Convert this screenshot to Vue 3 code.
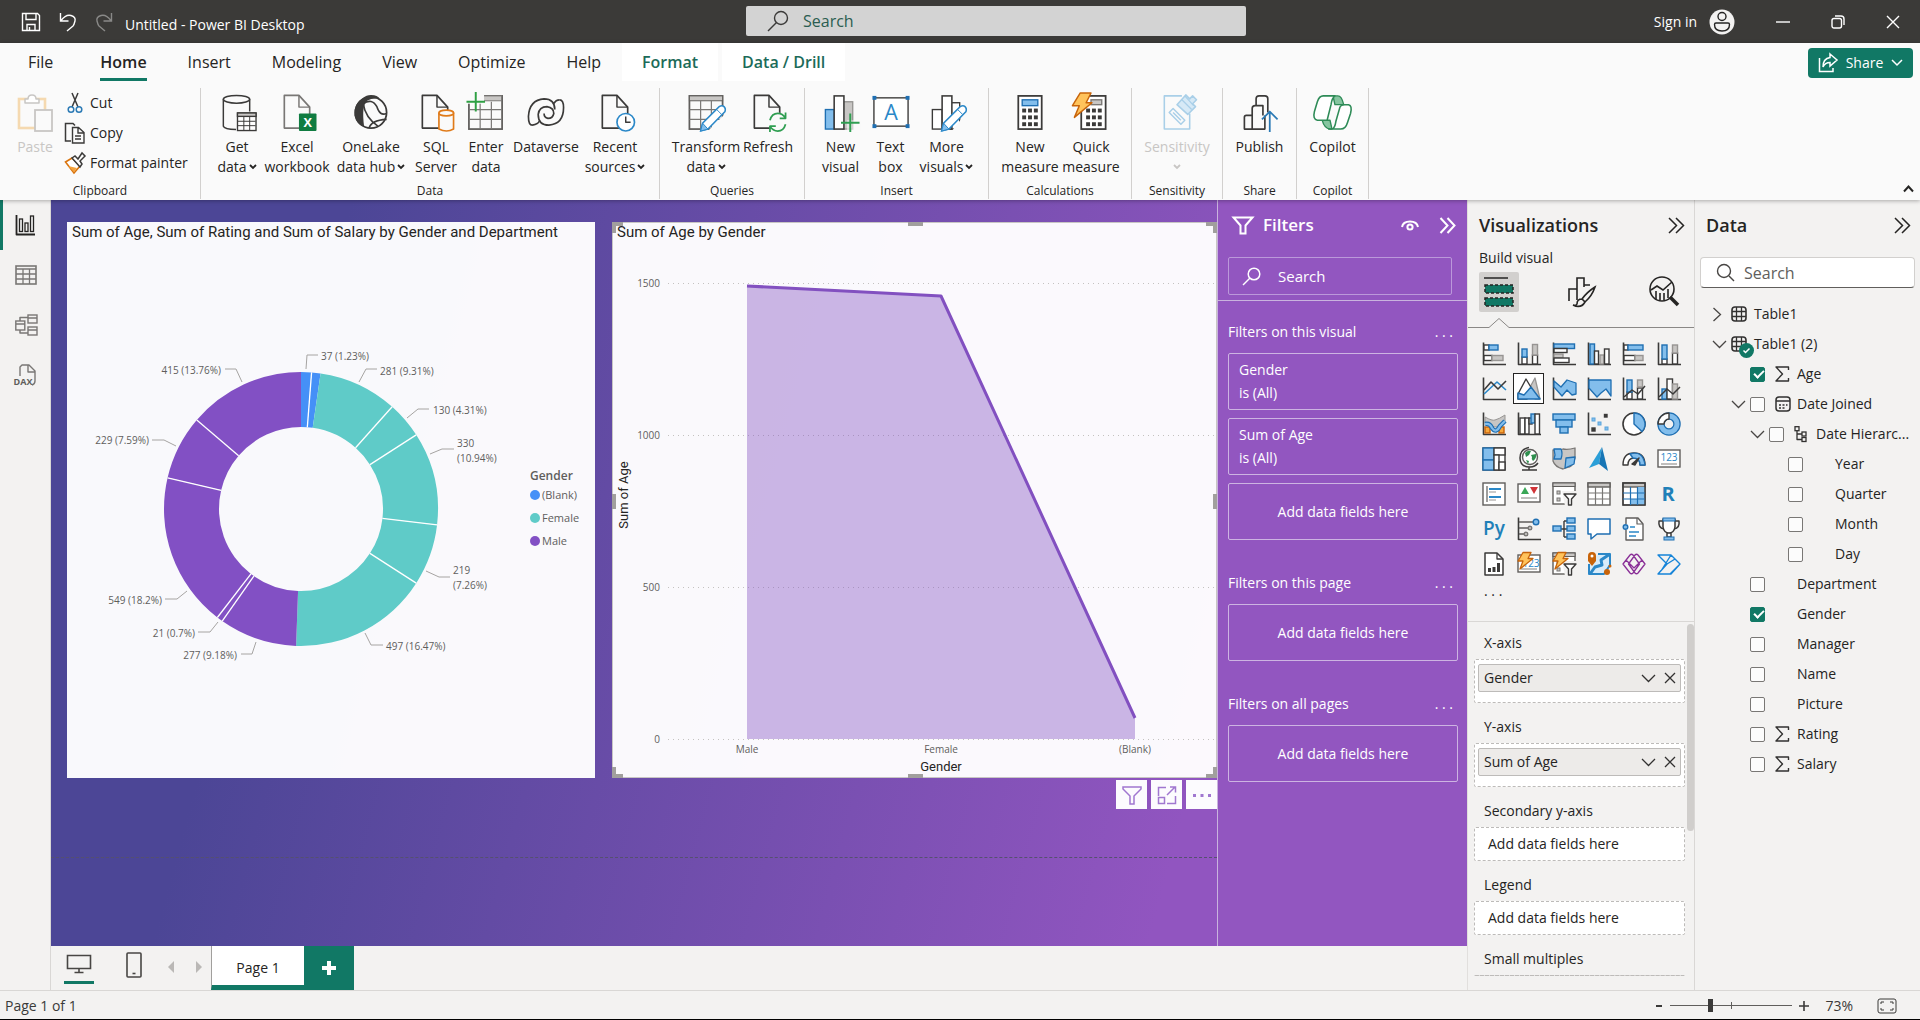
<script setup>
const INK = '#3b3a39'
const BLUE = '#83beec'
const DEEP = '#1f6fb2'
const GREY = '#c8c6c4'

const rect = (x, y, w, h, fill = '#fff', stroke = INK, sw = 1.4) =>
  `<rect x="${x}" y="${y}" width="${w}" height="${h}" fill="${fill}" stroke="${stroke}" stroke-width="${sw}"/>`
const line = (d, stroke = INK, sw = 1.5, fill = 'none') =>
  `<path d="${d}" stroke="${stroke}" stroke-width="${sw}" fill="${fill}" stroke-linejoin="round"/>`
const circle = (x, y, r, fill = 'none', stroke = INK, sw = 1.4) =>
  `<circle cx="${x}" cy="${y}" r="${r}" fill="${fill}" stroke="${stroke}" stroke-width="${sw}"/>`
const glyph = (x, y, size, text, fill = DEEP, weight = 400) =>
  `<text x="${x}" y="${y}" font-size="${size}" fill="${fill}" font-weight="${weight}" text-anchor="middle">${text}</text>`
const doc = (x, stroke = INK) =>
  line(`M${x} 3.5h15l11 12v21.5h-26z`, stroke, 1.7, '#fafafa') + line(`M${x + 15} 3.5v12h11`, stroke, 1.5)
const pencil =
  '<path d="M14.5 40l2-8L33.5 15q3-2 5 0t1 5L22 38z" fill="#fff" stroke="#2b88c8" stroke-width="1.5"/><path d="M14.5 40l2-8 5.5 6z" fill="#83beec" stroke="#2b88c8"/><path d="M31 18l5 5" stroke="#2b88c8"/>'
const bolt = line('M6 .5h8l-3 6h5L3 17l3-8H1z', '#c8640a', 1.3, '#ffc35b')

const ribbonIcons = {
  getData:
    line('M6 7.5V35q1 3 13 3.5M33 7.5V20') + '<ellipse cx="19.5" cy="7.5" rx="13.5" ry="4" fill="#fafafa" stroke="#3b3a39" stroke-width="1.6"/>' +
    rect(20.5, 21.5, 19, 18, '#fff') + rect(20.5, 21.5, 19, 3.5, GREY) + line('M27 25v14M33 25v14M21 30h18M21 34.5h18', INK, 1),
  excel: doc(7, '#797775') + '<rect x="22" y="22" width="18" height="18" rx="1" fill="#107c41"/>' + glyph(31, 36, 13, 'X', '#fff', 700),
  onelake:
    circle(20, 21, 16, '#fafafa', INK, 1.8) +
    '<path d="M20 3q7 0 9 4-8-1-13 2-6 5-3 27-8-3-10-12Q2 12 12 6q3-3 8-3z" fill="#3b3a39"/>' +
    line('M12 12q2 14 15 23M12 12q9-6 14 3 3 10 10 7M18 37Q20 29 36 28', INK, 1.7),
  sql: doc(6) + line('M23 21v17q8 4 15 0V21', '#e07b1a', 1.7, '#fafafa') + '<ellipse cx="30.5" cy="21.5" rx="7.5" ry="3" fill="#fafafa" stroke="#e07b1a" stroke-width="1.7"/>',
  enter:
    rect(2.5, 4, 34, 34, '#fafafa', '#605e5c', 1.8) + rect(12, 4, 24, 5, GREY, '#797775', 1) +
    line('M14 10v28M25.5 10v28M3 18h33M3 28h33', '#797775', 1.2) + '<path d="M0 2h18v10H0z" fill="#fafafa"/>' + line('M9.5 0v20M0 10h19', '#2ea043', 2),
  dataverse:
    line('M34 8q4 0 4 8 0 17-15 18-11 0-11-11 1-8 9-8 7 1 7 7-1 5-6 5-4-1-4-5', INK, 1.7) +
    line('M6 34q-4 0-4-9Q3 8 18 7q11 0 11 11M6 34q6-1 7-4M34 8q-4 0-6 4', INK, 1.7),
  recent: doc(7) + circle(31, 31, 9, '#fff', '#2b88c8', 1.7) + line('M31 25v6h5', INK, 1.5),
  transform:
    rect(3, 4, 34, 34, '#fafafa', '#605e5c', 1.8) + rect(3, 4, 34, 5, GREY, '#605e5c', 1) +
    line('M14.5 9v29M25.5 9v29M3 18h34M3 28h34', '#797775', 1.2) + '<path d="M22 40l18-18v18z" fill="#fafafa"/>' + pencil,
  refresh:
    doc(6) + '<circle cx="30" cy="31" r="10" fill="#fafafa"/>' + line('M22 29q2-7 8-7 5 0 8 5v-6M38 27h-6M38 33q-2 7-8 7-5 0-8-5v6M22 35h6', '#2f9e51', 1.8),
  newVisual: rect(4, 18, 9, 20, BLUE, DEEP) + rect(22, 10, 10, 28, GREY, '#979593') + rect(13, 4, 10, 34, '#fff', INK, 1.6) + '<path d="M26 29h14v11H26z" fill="#fafafa" opacity=".6"/>' + line('M29.5 22v19M20 31.5h19', '#2f9e51', 2),
  textBox: rect(2.5, 6, 35, 29, '#fff', INK, 1.4) + [[1, 4], [35, 4], [1, 33], [35, 33]].map(([x, y]) => `<rect x="${x}" y="${y}" width="4" height="4" fill="#1f6fb2"/>`).join('') + glyph(20, 29, 22, 'A', '#2b88c8'),
  moreVisuals: rect(5, 18, 10, 20) + rect(24, 11, 9, 27) + rect(15, 4, 10, 34, '#fff', INK, 1.6) + '<path d="M25 40l14-18v18z" fill="#fafafa"/>' + pencil,
  newMeasure: rect(8, 4, 24, 34, '#fff', INK, 1.8) + rect(12, 8, 16, 6, BLUE, DEEP) + [17, 24, 31].map((y) => [12, 18, 24].map((x) => `<rect x="${x}" y="${y}" width="4" height="4" fill="${INK}"/>`).join('')).join(''),
  quickMeasure: rect(10, 4, 25, 34, '#fff', INK, 1.8) + rect(20, 8, 11, 5, GREY, '#797775') + [17, 24, 31].map((y) => [15, 21, 27].map((x) => `<rect x="${x}" y="${y}" width="4" height="4" fill="${INK}"/>`).join('')).join('') + line('M9 1h11l-5 10h6L3 26l5-12H1z', '#c8640a', 1.5, '#ffc35b'),
  sensitivity:
    line('M25 4H7v34h26V22', '#a9cfe8', 1.6) + line('M12 21l4-4 12 12-4 4zM16 21l8 8', '#a9cfe8', 1.5) +
    line('M20 13l9-10 4 4 3-3 4 4-4 4 3 3-8 8z', '#a9cfe8', 1.6, '#d6e9f6') + line('M25 8l10 10M28 4l9 10', '#a9cfe8', 1.3),
  publish: line('M12 38H4V26q0-2 2-2h6zM12 38V17q0-3 3-3h8v10M16 14V7q0-3 3-3h6q3 0 3 3v14M12 38h13V24', INK, 1.7) + line('M30 41V20M22 28l8-8 8 8', '#2b7ab5', 1.8),
  copilot:
    line('M21 4h5q4 0 6 9h-9zM10 29h8l2 9h-2q-6-1-8-9z', '#2e8b57', 1.4, '#86c5a0') +
    line('M11 4h12q-3 2-4 9l-4 16H5q-5-1-3-9l3-10q2-6 6-6z', '#2e8b57', 1.6, '#fff') +
    line('M20 38q3-1 4-8l4-14q1-3 5-3h4q4 1 2 9l-3 9q-2 7-7 7H16', '#2e8b57', 1.6, '#fff'),
  paste:
    rect(4, 7, 26, 29, '#fafafa', '#f5d9b0', 2.6) + line('M10 11V7h3q0-4 4-4t4 4h3v4z', '#c8c6c4', 1.5, '#fff') + rect(20, 18, 17, 21, '#fafafa', '#c8c6c4', 1.8),
}

const ribbonGroups = [
  {
    name: 'Data', key: 'data',
    tools: [
      ['getData', 'Get', 'data', true], ['excel', 'Excel', 'workbook'], ['onelake', 'OneLake', 'data hub', true], ['sql', 'SQL', 'Server'],
      ['enter', 'Enter', 'data'], ['dataverse', 'Dataverse', ''], ['recent', 'Recent', 'sources', true],
    ],
  },
  { name: 'Queries', key: 'queries', tools: [['transform', 'Transform', 'data', true], ['refresh', 'Refresh', '']] },
  { name: 'Insert', key: 'insert', tools: [['newVisual', 'New', 'visual'], ['textBox', 'Text', 'box'], ['moreVisuals', 'More', 'visuals', true]] },
  { name: 'Calculations', key: 'calc', tools: [['newMeasure', 'New', 'measure'], ['quickMeasure', 'Quick', 'measure']] },
  { name: 'Sensitivity', key: 'sens', off: true, tools: [['sensitivity', 'Sensitivity', '', true]] },
  { name: 'Share', key: 'publish', tools: [['publish', 'Publish', '']] },
  { name: 'Copilot', key: 'copilot', tools: [['copilot', 'Copilot', '']] },
]

const tabs = ['File', 'Home', 'Insert', 'Modeling', 'View', 'Optimize', 'Help', 'Format', 'Data / Drill']

const axis = line('M1.5 .5V22.5H24', INK, 1.6)
const sheet = rect(1, 1, 22, 22, '#fff', '#605e5c') + rect(1, 1, 22, 4, GREY, '#605e5c')
const filterCard = rect(1, 1, 22, 21, '#fff', '#605e5c') + rect(1, 1, 22, 3.5, GREY, '#605e5c', 1) + rect(5, 9, 3, 3, GREY, '#797775', 1) + rect(5, 16, 3, 3, GREY, '#797775', 1) + '<path d="M10 9h14v15H13z" fill="#f3f2f1"/>' + line('M12 12h12l-4.5 5v6h-3v-6z', INK, 1.4, '#fff')
const visualIcons = [
  ['Stacked bar chart', axis + rect(2, 3, 5, 5) + rect(7, 3, 9, 5, BLUE, DEEP) + rect(2, 13.5, 8, 5) + rect(10, 13.5, 11, 5, GREY, '#979593')],
  ['Stacked column chart', axis + rect(5, 15, 5, 7) + rect(5, 7, 5, 8, BLUE, DEEP) + rect(15.5, 13, 5, 9) + rect(15.5, 2.5, 5, 10.5, GREY, '#979593')],
  ['Clustered bar chart', axis + rect(2, 2, 20.5, 4.5, BLUE, DEEP) + rect(2, 6.5, 13, 4) + rect(2, 12, 9, 4, GREY, '#979593') + rect(2, 16, 15, 4.5)],
  ['Clustered column chart', axis + rect(3, 2, 4.5, 20, BLUE, DEEP) + rect(7.5, 9, 4, 13) + rect(13, 13, 4, 9, GREY, '#979593') + rect(17.5, 7, 4.5, 15)],
  ['100% stacked bar chart', axis + rect(2, 3, 4, 5) + rect(6, 3, 15, 5, BLUE, DEEP) + rect(2, 13.5, 11, 5) + rect(13, 13.5, 8, 5, GREY, '#979593')],
  ['100% stacked column chart', axis + rect(5, 17, 5, 5) + rect(5, 3, 5, 14, BLUE, DEEP) + rect(15.5, 11, 5, 11) + rect(15.5, 3, 5, 8, GREY, '#979593')],
  ['Line chart', axis + line('M2 17L15 5l9 8', '#2b88c8', 1.6) + line('M2 13l7-8 7 7 8-8', INK, 1.6)],
  ['Area chart', line('M12 12l6-11 5 21h-5z', '#979593', 1.3, GREY) + line('M1 17L9 2l9 15-8 5H1z', INK, 1.4, '#fff') + line('M1 22v-6l6 2 7-8 9 12z', DEEP, 1.4, BLUE)],
  ['Stacked area chart', axis + line('M2 4l7 6 6-7 9 3v11l-4 1-5-5-5 6-8-9z', DEEP, 1.3, BLUE)],
  ['100% stacked area chart', axis + line('M2 3h22v16l-5-7-5 4-4 4-8-9z', DEEP, 1.3, BLUE)],
  ['Line and stacked column chart', axis + rect(5, 15, 5, 7) + rect(5, 3, 5, 12, BLUE, DEEP) + rect(15.5, 11, 5, 11) + rect(15.5, 3, 5, 7, GREY, '#979593') + line('M2 20l8-7 6 4 7-8')],
  ['Line and clustered column chart', axis + rect(5, 12, 5, 10, BLUE, DEEP) + rect(10, 2, 5.5, 20) + rect(15.5, 7, 5, 15, GREY, '#979593') + line('M2 20l8-8 6 5 7-7')],
  ['Ribbon chart', axis + line('M3 5q7 4 10 3 4-1 10-5v8q-6 4-9 4T3 11z', '#979593', 1, GREY) + rect(3, 15, 5, 6, '#f7a83c', '#c8640a') + rect(17, 15, 5, 6, '#f7a83c', '#c8640a') + line('M3 12q5-1 7 4 4 6 8-2l5-5', DEEP, 4.5) + line('M3 12q5-1 7 4 4 6 8-2l5-5', BLUE, 2.2)],
  ['Waterfall chart', axis + rect(3, 6, 5, 16) + rect(8, 6, 4, 16) + rect(12, 6, 3, 6, GREY) + rect(14, 2, 4, 9, BLUE, DEEP) + rect(18, 2, 4.5, 20)],
  ['Funnel', rect(1, 2, 22, 6, BLUE, DEEP) + rect(4, 8, 16, 7, BLUE, DEEP) + rect(8, 15, 8, 6, BLUE, DEEP)],
  ['Scatter chart', axis + rect(17.5, 2.5, 2.5, 2.5, INK) + rect(5, 6, 3, 3, BLUE, '#5ba4dc', 1) + rect(11, 10, 3, 3, BLUE, '#5ba4dc', 1) + rect(18, 15, 3, 3, BLUE, '#5ba4dc', 1) + rect(5, 16, 3, 3, INK)],
  ['Pie chart', circle(12, 12, 11, '#fff', INK, 1.6) + line('M12 1a11 11 0 0 1 8 18.5L12 12z', DEEP, 1.4, BLUE)],
  ['Donut chart', circle(12, 12, 8, 'none', DEEP, 7.5) + circle(12, 12, 8, 'none', BLUE, 5) + line('M1 12A11 11 0 0 1 12 1v6a5 5 0 0 0-5 5z', INK, 1.4, '#fff')],
  ['Treemap', rect(1, 1, 22, 22) + rect(1, 1, 11, 12, BLUE, DEEP) + rect(1, 13, 11, 10, BLUE, DEEP) + rect(12, 1, 11, 7) + rect(12, 8, 5, 15) + rect(17, 15, 6, 8)],
  ['Map', circle(13, 10, 7.5, '#fff', '#605e5c') + '<path d="M8 6q3-3 6-2l-2 4-3 2zM14 8l5-1q1 4-3 7-2-2-1-4zM9 13l3 1-1 3z" fill="#2f8f4e"/>' + line('M12 .5Q3 2 3 11t10 9q5 0 8-4M12 20v3M5 23h15')],
  ['Filled map', line('M1 3q6 1 10-1 5 1 12-1v10q-2 8-6 9l-6 2q-8-2-10-8z', '#797775', 1.3, GREY) + line('M2 2h7q2 4 0 10H2l1-4zM14 11l9-1-1 7-9 4z', DEEP, 1.3, BLUE)],
  ['Azure map', '<path d="M15 0L2 21l10-4z" fill="#2b9fd8"/><path d="M15 0l6 24-9-7z" fill="#1675b5"/>'],
  ['Gauge', line('M1 18q0-12 11-12t11 12h-5q0-7-6-7t-6 7z', INK, 1.4, '#fff') + line('M8 7q13-4 15 11h-5q0-7-7-7z', DEEP, 1.4, BLUE) + line('M10 17l7-6-4 7z', INK, 1.5, INK)],
  ['Card', rect(1, 3, 22, 17, '#fff', '#605e5c') + glyph(12, 14, 10, '123', '#2b88c8') + line('M4 17h16', '#979593', 1.2)],
  ['Multi-row card', rect(1, 1, 22, 22, '#fff', '#605e5c') + line('M5 4v16', '#605e5c', 1.2) + line('M7 7h12M7 15h12', '#2b88c8', 2.2) + line('M7 10h7M7 18h7', '#979593', 1.2)],
  ['KPI', rect(1, 2, 22, 18, '#fff', '#605e5c') + '<path d="M4 12l4-7 4 7z" fill="#3aa757"/><path d="M13 5h8l-4 7z" fill="#d13438"/>' + line('M4 16h16', '#979593', 1.2)],
  ['Slicer', filterCard],
  ['Table', sheet + line('M8.5 5v18M15.5 5v18M1 11h22M1 17h22', '#797775', 1.2)],
  ['Matrix', sheet + '<path d="M15.5 5H23v18H8.5v-6h7z" fill="#83beec"/>' + rect(1, 1, 22, 22, 'none') + line('M8.5 5v18M15.5 5v18M1 11h22M1 17h22', '#1f6fb2', 1.2)],
  ['R script visual', glyph(11, 19, 20, 'R', '#2080b8', 700)],
  ['Python visual', glyph(12, 18, 19, 'Py', '#2080b8', 600)],
  ['Key influencers', axis + line('M2 5h14M2 11h9M2 17h5', '#605e5c', 1.3) + circle(19, 5, 2.8, BLUE, DEEP) + circle(13, 11, 1.8, GREY, '#797775') + circle(9, 17, 1.8, GREY, '#797775')],
  ['Decomposition tree', line('M9 12h6M12 4v16M12 4h3M12 20h3', INK, 1.4) + rect(1, 9, 8, 5, BLUE, DEEP) + rect(15, 1, 8, 5, BLUE, DEEP) + rect(15, 9, 8, 5, BLUE, DEEP) + rect(15, 17, 8, 5, BLUE, DEEP)],
  ['Questions and answers', line('M1 2h22v15H10l-6 5v-5H1z', DEEP, 1.5, '#fff')],
  ['Narrative', line('M4 7V1h12l5 6v16H4V13', '#605e5c', 1.4, '#fff') + line('M15 1v6h6', '#605e5c', 1.2) + circle(3.5, 10, 2.3, BLUE, DEEP) + line('M8 10h5M7 15h10M7 19h7', '#2b88c8', 1.4)],
  ['Goals', line('M6 4H2q-1 7 5 8M18 4h4q1 7-5 8', INK, 1.5) + line('M6 2h12v8q-1 6-6 6t-6-6zM10 16h4v4h-4z', INK, 1.5, '#fff') + rect(6, 1, 12, 3, BLUE, DEEP, 1) + rect(7, 20, 10, 3, BLUE, DEEP, 1)],
  ['Paginated report', line('M3 1h12l6 6v16H3z', INK, 1.5, '#fff') + line('M15 1v6h6', INK, 1.3) + line('M7.5 20v-4M12 20v-5M16.5 20v-9', INK, 3)],
  ['Card (new)', rect(1, 3, 22, 17, '#fff', '#605e5c') + glyph(14, 15, 10, '123', '#2b88c8') + line('M4 17h16', '#979593', 1.2) + bolt],
  ['Slicer (new)', filterCard + bolt],
  ['ArcGIS Maps', line('M11 2h12v11l-6 9H2V12', '#2b88c8', 2, '#d8ecfa') + line('M23 2l-9 6 1 5-7 2-5 7', '#2b88c8', 3) + '<path d="M1 4q0-4 4-4t4 4v5l-4 5-4-5z" fill="#c8640a"/><circle cx="5" cy="4" r="1.5" fill="#fff"/><circle cx="20" cy="20" r="3" fill="#c8640a"/><circle cx="23" cy="14" r="1.5" fill="#c8640a"/>'],
  ['Power Apps', line('M1 12l7-9q1.5-1.500 3 0L17.500 12l-6.500 9q-1.500 1.500-3 0zM6.500 12L13 3q1.500-1.500 3 0l7 9-7 9q-1.500 1.500-3 0zM4 8l8 8M20 8l-8 8', '#8a2f97', 1.3)],
  ['Power Automate', line('M1 3h13l9 9-9 10H1l9-10zM10 12l8-5M4 19L14 3M13 22l8-8', '#1684d8', 1.4)],
]

const deg = (pct) => (pct / 100) * Math.PI * 2
const at = (pct, r) => [Math.sin(deg(pct)) * r, -Math.cos(deg(pct)) * r]
const slicesRaw = [
  [1.23, 'blank'], [1.05, 'blank'], [9.31, 'female'], [4.31, 'female'], [10.94, 'female'], [7.26, 'female'], [16.47, 'female'],
  [9.18, 'male'], [0.7, 'male'], [18.2, 'male'], [7.59, 'male'], [13.76, 'male'],
]
let sum = 0
const slices = slicesRaw.map(([pct, kind], i) => {
  const from = sum
  sum += pct
  const [a, b, c, d] = [at(from, 137), at(sum, 137), at(sum, 82), at(from, 82)]
  const next = slicesRaw[i + 1]
  return {
    kind,
    d: `M${a}A137 137 0 0 1 ${b}L${c}A82 82 0 0 0 ${d}Z`,
    edge: next && next[1] === kind ? `M${b}L${c}` : '',
  }
})
const callouts = [
  { x: 20, y: -149, lines: ['37 (1.23%)'], d: 'M5 -140L6 -154H17' },
  { x: 79, y: -134, lines: ['281 (9.31%)'], d: 'M58 -127L65 -140H76' },
  { x: 132, y: -95, lines: ['130 (4.31%)'], d: 'M106 -91L117 -100H128' },
  { x: 156, y: -62, lines: ['330', '(10.94%)'], d: 'M129 -55L141 -60H153' },
  { x: 152, y: 65, lines: ['219', '(7.26%)'], d: 'M125 62L138 68H149' },
  { x: 85, y: 141, lines: ['497 (16.47%)'], d: 'M64 124L70 136H82' },
  { x: -64, y: 150, end: true, lines: ['277 (9.18%)'], d: 'M-45 133L-49 145H-60' },
  { x: -106, y: 128, end: true, lines: ['21 (0.7%)'], d: 'M-83 113L-91 123H-103' },
  { x: -139, y: 95, end: true, lines: ['549 (18.2%)'], d: 'M-114 82L-124 90H-136' },
  { x: -152, y: -65, end: true, lines: ['229 (7.59%)'], d: 'M-125 -63L-137 -69H-149' },
  { x: -80, y: -135, end: true, lines: ['415 (13.76%)'], d: 'M-59 -127L-65 -140H-76' },
]
const legend = [['blank', '(Blank)', -14], ['female', 'Female', 9], ['male', 'Male', 32]]

const filterSections = [
  { name: 'Filters on this visual', fields: ['Gender', 'Sum of Age'] },
  { name: 'Filters on this page', fields: [] },
  { name: 'Filters on all pages', fields: [] },
]
const wells = [
  { name: 'X-axis', field: 'Gender' },
  { name: 'Y-axis', field: 'Sum of Age' },
  { name: 'Secondary y-axis' },
  { name: 'Legend' },
]
const fields = [
  { name: 'Age', level: 1, icon: 'sum', on: true },
  { name: 'Date Joined', level: 1, icon: 'date', open: true },
  { name: 'Date Hierarc...', level: 2, icon: 'tree', open: true },
  { name: 'Year', level: 3 }, { name: 'Quarter', level: 3 }, { name: 'Month', level: 3 }, { name: 'Day', level: 3 },
  { name: 'Department', level: 1 }, { name: 'Gender', level: 1, on: true }, { name: 'Manager', level: 1 },
  { name: 'Name', level: 1 }, { name: 'Picture', level: 1 }, { name: 'Rating', level: 1, icon: 'sum' }, { name: 'Salary', level: 1, icon: 'sum' },
]
const fieldIcons = {
  sum: line('M13.5 4V1H1l6.5 7L1 15h12.5v-3', '#323130', 1.4),
  date: '<rect x="1" y="1" width="14" height="14" rx="3" fill="none" stroke="#323130" stroke-width="1.5"/><path d="M1 5h14M4 9h2M7.5 9h2M11 9h1.5M4 12h2M7.5 12h2" stroke="#323130" stroke-width="1.5"/>',
  tree: rect(1, 0.7, 4, 4, 'none', '#323130', 1.3) + rect(8, 6, 4, 4, 'none', '#323130', 1.3) + rect(8, 11.5, 4, 4, 'none', '#323130', 1.3) + line('M3 5v8.5h5M3 8h5', '#323130', 1.3),
  table: '<rect x="1" y="1" width="14" height="14" rx="3" fill="none" stroke="#323130" stroke-width="1.6"/><path d="M5.5 1v14M10.5 1v14M1 5.5h14M1 10.5h14" stroke="#323130" stroke-width="1.3"/>',
}
const railIcons = [
  ['Report view', line('M1.5 1v19.5H20', '#252423', 1.8) + rect(4.5, 5, 3, 12.5, 'none', '#252423', 1.3) + rect(10, 9, 3, 8.5, 'none', '#252423', 1.3) + rect(15.5, 2, 3, 15.5, 'none', '#252423', 1.3)],
  ['Table view', rect(1, 2, 20, 18, 'none', '#797775', 1.6) + line('M1 5h20M1 10h20M1 15h20M8 5v15M14.5 5v15', '#797775', 1.3)],
  ['Model view', rect(0.8, 7, 9, 9, 'none', '#797775') + rect(13, 1, 9, 8, 'none', '#797775') + rect(13, 13, 9, 8, 'none', '#797775') + line('M1 10h9M13 4h9M13 16h9M5 7V3.5h8M5 16v3h8', '#797775')],
  ['DAX query view', line('M5 12V3l2-2h7l6 6v10q0 3-3 4M13 1v7h7', '#797775', 1.4) + glyph(8, 21, 9, 'DAX', '#605e5c', 700)],
]
</script>

<template>
  <div class="app">
    <header class="titlebar">
      <div class="quick">
        <button aria-label="Save"><svg width="20" height="20" viewBox="0 0 20 20"><path d="M1.5 1.5h15l2 2v15h-17zM5 1.5v6h10v-6M6 18.5v-6h8v6M8.5 15v3.5" /></svg></button>
        <button aria-label="Undo"><svg width="18" height="20" viewBox="0 0 18 20"><path d="M1.5 1v8h8M2 8.5Q7 2 12 3.5t4 5.5-2 5l-6 5" /></svg></button>
        <button aria-label="Redo" class="dim"><svg width="18" height="20" viewBox="0 0 18 20"><path d="M16.5 1v8h-8M16 8.5Q11 2 6 3.5T2 9t2 5l6 5" /></svg></button>
        <span class="doc-title">Untitled - Power BI Desktop</span>
      </div>
      <label class="top-search">
        <svg width="22" height="22" viewBox="0 0 22 22"><circle cx="14" cy="8" r="6.500" /><path d="M9.5 12.5L1 21" /></svg>
        <input type="text" placeholder="Search" aria-label="Search" />
      </label>
      <div class="window">
        <button class="signin">Sign in
          <svg width="26" height="26" viewBox="0 0 26 26"><circle cx="13" cy="13" r="12.5" fill="#f3f2f1" stroke="none" /><circle cx="13" cy="7.5" r="4" stroke="#252423" /><path d="M7 14h12q1.5 0 1.5 1.5 0 6.5-7.5 6.5t-7.5-6.500Q5.5 14 7 14z" stroke="#252423" /></svg>
        </button>
        <button aria-label="Minimize"><svg width="14" height="14" viewBox="0 0 14 14"><path d="M0 7h14" /></svg></button>
        <button aria-label="Restore"><svg width="14" height="14" viewBox="0 0 14 14"><rect x="1" y="3.5" width="9.5" height="9.5" rx="2" /><path d="M4 1h6q3 0 3 3v6" /></svg></button>
        <button aria-label="Close"><svg width="14" height="14" viewBox="0 0 14 14"><path d="M1 1l12 12M13 1L1 13" /></svg></button>
      </div>
    </header>

    <section class="ribbon">
      <nav class="tabs">
        <button v-for="t in tabs" :key="t" class="tab" :class="{ file: t === 'File', home: t === 'Home', extra: t === 'Format' || t === 'Data / Drill' }"><span>{{ t }}</span></button>
        <button class="share-button">
          <svg width="20" height="20" viewBox="0 0 20 20"><path d="M1.5 5v13.5H15V15M12 1l7 6-7 6V9.5q-5 0-7 4.5 0-8.5 7-9.5z" /></svg>
          Share
          <svg width="12" height="8" viewBox="0 0 12 8"><path d="M1 1l5 5 5-5" /></svg>
        </button>
      </nav>
      <div class="groups">
        <div class="group clip">
          <div class="clip-tools">
            <button class="tool off">
              <svg class="tool-icon" viewBox="0 0 40 40" v-html="ribbonIcons.paste"></svg>
              <span>Paste</span>
            </button>
            <div class="clip-list">
              <button><svg width="22" height="22" viewBox="0 0 22 22"><path d="M8 1l6 14M14 1L8 15" stroke="#3b3a39" stroke-width="1.5" /><circle cx="7" cy="17.5" r="2.8" stroke="#2b7ab5" stroke-width="1.5" /><circle cx="15" cy="17.5" r="2.8" stroke="#2b7ab5" stroke-width="1.5" /></svg>Cut</button>
              <button><svg width="22" height="22" viewBox="0 0 22 22"><path d="M7 19H1.5V1.5H9l2 2" stroke="#3b3a39" stroke-width="1.5" /><path d="M8.5 5.5h6l5.5 5v10.5H8.5zM14 5.5v5.5h6M11 14h6M11 17h6" stroke="#3b3a39" stroke-width="1.4" /></svg>Copy</button>
              <button><svg width="22" height="22" viewBox="0 0 22 22"><path d="M1.5 10L8 6l8 8-6 7z" fill="#fff" stroke="#d9730d" stroke-width="1.6" /><path d="M4 14l9 2-3 4z" fill="#f4a33c" /><path d="M8 6l3-2 3 3 4-6 3 3-5 5 2 3-2 3z" stroke="#3b3a39" stroke-width="1.5" fill="#fff" /></svg>Format painter</button>
            </div>
          </div>
          <div class="group-name">Clipboard</div>
        </div>
        <div v-for="g in ribbonGroups" :key="g.key" class="group" :class="g.key">
          <div class="tools">
            <button v-for="t in g.tools" :key="t[0]" class="tool" :class="{ off: g.off }">
              <svg class="tool-icon" viewBox="0 0 40 41" v-html="ribbonIcons[t[0]]"></svg>
              <span>{{ t[1] }}</span>
              <span class="second">{{ t[2] }}<svg v-if="t[3]" class="caret" width="8" height="6" viewBox="0 0 8 6"><path d="M1 1l3 3 3-3" /></svg></span>
            </button>
          </div>
          <div class="group-name">{{ g.name }}</div>
        </div>
        <button class="collapse" aria-label="Collapse ribbon"><svg width="11" height="8" viewBox="0 0 11 8"><path d="M1 6.5l4.5-5 4.5 5" /></svg></button>
      </div>
    </section>

    <main class="body">
      <nav class="rail">
        <button v-for="(r, i) in railIcons" :key="r[0]" :class="{ current: i === 0 }" :aria-label="r[0]"><svg width="23" height="23" viewBox="0 0 23 23" v-html="r[1]"></svg></button>
      </nav>

      <div class="work">
        <div class="upper">
          <div class="canvas">
            <div class="page">
              <section class="visual donut">
                <h2>Sum of Age, Sum of Rating and Sum of Salary by Gender and Department</h2>
                <svg viewBox="-234 -267 528 536">
                  <path v-for="(s, i) in slices" :key="i" :d="s.d" :class="s.kind" />
                  <path v-for="(s, i) in slices" :key="'e' + i" :d="s.edge" stroke="#fff" stroke-width="1.3" />
                  <g v-for="c in callouts" :key="c.d" class="callout">
                    <path :d="c.d" />
                    <text v-for="(l, i) in c.lines" :key="l" :x="c.x" :y="c.y + i * 15" :text-anchor="c.end ? 'end' : 'start'">{{ l }}</text>
                  </g>
                  <text x="229" y="-29" class="legend-title">Gender</text>
                  <g v-for="l in legend" :key="l[1]">
                    <circle cx="234" :cy="l[2]" r="5" :class="l[0]" />
                    <text x="241" :y="l[2] + 4" class="legend-text">{{ l[1] }}</text>
                  </g>
                </svg>
              </section>
              <div class="selected">
                <section class="visual area">
                  <h2>Sum of Age by Gender</h2>
                  <svg viewBox="0 0 605 536">
                    <g class="grid"><path d="M56 41.5H602M56 193.5H602M56 345.5H602M56 497.5H602" /></g>
                    <path d="M135 44L329 54 523 476V497H135z" fill="#8250c0" fill-opacity=".4" />
                    <path d="M135 44L329 54 523 476" fill="none" stroke="#8250c0" stroke-width="3" stroke-linejoin="round" />
                    <g class="ticks">
                      <text x="48" y="45" text-anchor="end">1500</text><text x="48" y="197" text-anchor="end">1000</text><text x="48" y="349" text-anchor="end">500</text><text x="48" y="501" text-anchor="end">0</text>
                      <text x="135" y="511" text-anchor="middle">Male</text><text x="329" y="511" text-anchor="middle">Female</text><text x="523" y="511" text-anchor="middle">(Blank)</text>
                    </g>
                    <text class="axis-title" x="329" y="529" text-anchor="middle">Gender</text>
                    <text class="axis-title" transform="translate(16 253) rotate(-90)" text-anchor="middle">Sum of Age</text>
                  </svg>
                  <i class="handle tl"></i><i class="handle tr"></i><i class="handle bl"></i><i class="handle br"></i>
                  <i class="handle t"></i><i class="handle b"></i><i class="handle l"></i><i class="handle r"></i>
                </section>
                <div class="visual-actions">
                  <button aria-label="Filters"><svg width="20" height="20" viewBox="0 0 20 20"><path d="M1 2h18v2l-7 7v8H8v-8L1 4z" /></svg></button>
                  <button aria-label="Focus mode"><svg width="20" height="20" viewBox="0 0 20 20"><path d="M1.5 11V2.5H9M18.5 11v7.5H10M1.5 12.5h6v6h-6zM10 10l8-8M13 2h5.5v5.5" /></svg></button>
                  <button aria-label="More options"><svg width="20" height="20" viewBox="0 0 20 20"><path d="M1 9h3v3H1zM8.5 9h3v3h-3zM16 9h3v3h-3z" fill="#a077d0" stroke="none" /></svg></button>
                </div>
              </div>
            </div>
          </div>

          <aside class="filters">
            <div class="pane-head">
              <svg width="22" height="19" viewBox="0 0 22 19"><path d="M1.5 1.5h19l-7 8v8h-5v-8z" stroke-width="2" /></svg>
              <h3>Filters</h3>
              <svg class="eye" width="18" height="11" viewBox="0 0 18 11"><path d="M1 7q1-5.5 8-5.5T17 7" stroke-width="2" /><circle cx="9" cy="7" r="2.6" stroke-width="2" /></svg>
              <button aria-label="Collapse filters"><svg width="17" height="17" viewBox="0 0 17 17"><path d="M1.5 1l7 7.5-7 7.5M8.5 1l7 7.5-7 7.5" stroke-width="2" /></svg></button>
            </div>
            <label class="filter-search"><svg width="19" height="19" viewBox="0 0 19 19"><circle cx="12" cy="7" r="5.8" /><path d="M8 11l-7 7" /></svg><input type="text" placeholder="Search" aria-label="Search filters" /></label>
            <section v-for="s in filterSections" :key="s.name" class="filter-section">
              <div class="section-head"><h4>{{ s.name }}</h4><button aria-label="More">. . .</button></div>
              <div v-for="f in s.fields" :key="f" class="filter-card"><span>{{ f }}</span><span>is (All)</span></div>
              <div class="filter-card drop">Add data fields here</div>
            </section>
          </aside>
        </div>

        <footer class="pages">
          <button class="layout desktop" aria-label="Desktop layout"><svg width="26" height="20" viewBox="0 0 26 20"><path d="M1.5 1.5h23v13h-23zM13 14.5v4M8.5 18.5h9" /></svg></button>
          <button class="layout" aria-label="Mobile layout"><svg width="16" height="26" viewBox="0 0 16 26"><rect x="1" y="1" width="14" height="24" rx="1" /><path d="M6.5 21.5h3" /></svg></button>
          <button class="step" aria-label="Previous page"><svg width="6" height="12" viewBox="0 0 6 12"><path d="M6 0v12L0 6z" /></svg></button>
          <button class="step" aria-label="Next page"><svg width="6" height="12" viewBox="0 0 6 12"><path d="M0 0v12l6-6z" /></svg></button>
          <button class="page-tab">Page 1</button>
          <button class="add-page" aria-label="New page"><svg width="14" height="14" viewBox="0 0 14 14"><path d="M7 0v14M0 7h14" /></svg></button>
        </footer>
      </div>

      <aside class="viz">
        <div class="pane-head"><h3>Visualizations</h3><button aria-label="Collapse visualizations"><svg width="17" height="17" viewBox="0 0 17 17"><path d="M1 1l7.5 7.5L1 16M8 1l7.5 7.5L8 16" /></svg></button></div>
        <p class="build">Build visual</p>
        <div class="modes">
          <button class="mode on" aria-label="Build visual"><svg width="32" height="32" viewBox="0 0 32 32"><path d="M1 2h24" stroke="#252423" stroke-width="1.5" /><path d="M2 9h28v8H2zM2 22h28v8H2z" fill="#117865" stroke="#252423" stroke-width="1.5" stroke-dasharray="3 2" /></svg></button>
          <button class="mode" aria-label="Format visual"><svg width="32" height="32" viewBox="0 0 32 32"><path d="M3 25V13h8V2h7v9M11 13v11M18 9h6" stroke="#252423" stroke-width="1.6" /><path d="M29 11q-8 5-13 12l3 3q7-6 10-15zM16 23q-5 0-5 5-1 2-4 1 8 4 12-3z" fill="#f3f2f1" stroke="#252423" stroke-width="1.6" /></svg></button>
          <button class="mode" aria-label="Analytics"><svg width="32" height="32" viewBox="0 0 32 32"><circle cx="14" cy="13" r="12" stroke="#252423" stroke-width="1.6" /><path d="M3 14l6-4 6 4 9-8M8 15v8M12 17v7M16 17v7M20 13v9" stroke="#252423" stroke-width="1.6" /><path d="M22 21l8 8" stroke="#252423" stroke-width="3.5" /></svg></button>
        </div>
        <div class="divider"><svg width="20" height="10" viewBox="0 0 20 10"><path d="M0 9.5L10 .5l10 9" /></svg></div>
        <div class="gallery">
          <button v-for="(v, i) in visualIcons" :key="v[0]" :aria-label="v[0]" :class="{ picked: i === 7 }"><svg width="24" height="24" viewBox="0 0 24 24" v-html="v[1]"></svg></button>
        </div>
        <button class="more-visuals">. . .</button>
        <div class="wells">
          <div class="scrollbar"></div>
          <template v-for="w in wells" :key="w.name">
            <h4>{{ w.name }}</h4>
            <div class="well" :class="{ filled: w.field }">
              <div v-if="w.field" class="pill">
                <span>{{ w.field }}</span>
                <button aria-label="Field options"><svg width="15" height="9" viewBox="0 0 15 9"><path d="M1 1l6.5 6.5L14 1" /></svg></button>
                <button aria-label="Remove field"><svg width="12" height="12" viewBox="0 0 12 12"><path d="M1 1l10 10M11 1L1 11" /></svg></button>
              </div>
              <span v-else>Add data fields here</span>
            </div>
          </template>
          <h4>Small multiples</h4>
          <div class="well cut"></div>
        </div>
      </aside>

      <aside class="data-pane">
        <div class="pane-head"><h3>Data</h3><button aria-label="Collapse data"><svg width="17" height="17" viewBox="0 0 17 17"><path d="M1 1l7.5 7.5L1 16M8 1l7.5 7.5L8 16" /></svg></button></div>
        <label class="data-search"><svg width="19" height="19" viewBox="0 0 19 19"><circle cx="8" cy="8" r="6.500" /><path d="M13 13l5 5" /></svg><input type="text" placeholder="Search" aria-label="Search data" /></label>
        <ul>
          <li class="level0"><span class="twist"><svg width="10" height="15" viewBox="0 0 10 15"><path d="M1.5 1l7 6.5-7 6.5" /></svg></span><svg class="kind" width="16" height="16" viewBox="0 0 16 16" v-html="fieldIcons.table"></svg><span>Table1</span></li>
          <li class="level0"><span class="twist"><svg width="15" height="9" viewBox="0 0 15 9"><path d="M1 1l6.5 6.5L14 1" /></svg></span><span class="kind badge-host"><svg width="16" height="16" viewBox="0 0 16 16" v-html="fieldIcons.table"></svg><svg class="badge" width="15" height="15" viewBox="0 0 15 15"><circle cx="7.5" cy="7.5" r="7.5" fill="#117865" stroke="none" /><path d="M4.5 7.5l2 2 4-4" stroke="#fff" stroke-width="1.5" /></svg></span><span>Table1 (2)</span></li>
          <li v-for="f in fields" :key="f.name" :class="'level' + f.level">
            <span class="twist"><svg v-if="f.open" width="15" height="9" viewBox="0 0 15 9"><path d="M1 1l6.5 6.5L14 1" /></svg></span>
            <label><input type="checkbox" :checked="f.on" /><svg class="kind" width="16" height="16" viewBox="0 0 16 16" v-html="fieldIcons[f.icon] || ''"></svg><span>{{ f.name }}</span></label>
          </li>
        </ul>
      </aside>
    </main>

    <footer class="status">
      <span>Page 1 of 1</span>
      <div class="zoom">
        <button aria-label="Zoom out"><svg width="6" height="14" viewBox="0 0 6 14"><path d="M0 7h6" stroke-width="2" /></svg></button>
        <input type="range" min="0" max="100" value="32" aria-label="Zoom" />
        <button aria-label="Zoom in"><svg width="10" height="14" viewBox="0 0 10 14"><path d="M0 7h10M5 2v10" stroke-width="1.6" /></svg></button>
        <span class="percent">73%</span>
        <button aria-label="Fit to page"><svg width="20" height="16" viewBox="0 0 20 16"><rect x="1" y="1" width="18" height="14" rx="2" /><path d="M4 6V4h3M13 4h3v2M16 10v2h-3M7 12H4v-2" /></svg></button>
      </div>
    </footer>
  </div>
</template>

<style>
body { margin: 0; background: #f3f2f1; }
</style>

<style scoped>
* { box-sizing: border-box; }
.app { min-height: 100vh; display: flex; flex-direction: column; font: 14px/20px "Open Sans", "Noto Sans", sans-serif; color: #252423; background: #f3f2f1; }
button { font: inherit; color: inherit; border: 0; background: none; padding: 0; margin: 0; }
input { font: inherit; color: inherit; border: 0; background: none; padding: 0; outline: none; min-width: 0; }
h2, h3, h4, p, ul { margin: 0; padding: 0; font-weight: 400; }
svg { display: block; fill: none; flex: none; overflow: visible; }
.titlebar { height: 43px; background: #3b3a38; color: #fff; display: grid; grid-template-columns: 746px 500px 1fr; align-items: center; }
.titlebar svg { stroke: #fff; stroke-width: 1.4; }
.quick { display: flex; align-items: center; gap: 18px; padding-left: 21px; }
.quick .dim { opacity: .4; }
.doc-title { margin-left: -6px; line-height: 20px; padding-top: 6px; }
.top-search { height: 30px; background: #d3d3d3; border-radius: 2px; display: flex; align-items: center; gap: 14px; padding-left: 21px; margin-bottom: 1px; font-size: 16px; }
.top-search svg { stroke: #3b3a39; }
.top-search input { flex: 1; }
.top-search input::placeholder { color: #2b5d50; opacity: 1; }
.window { display: flex; justify-content: flex-end; align-items: center; gap: 41px; padding-right: 20px; }
.signin { display: flex; align-items: center; gap: 12px; }

.ribbon { background: #fafafa; position: relative; z-index: 2; box-shadow: 0 1px 4px rgba(0, 0, 0, .3); }
.tabs { display: flex; padding: 0 7px 0 8px; height: 45px; }
.tab { height: 38px; padding: 0 20px; margin-right: 1px; font-size: 16px; }
.tab.file { margin-right: 7px; }
.tab.home { font-weight: 600; }
.tab span { display: block; line-height: 32px; margin-top: 3px; border-bottom: 3px solid transparent; }
.tab.home span { border-color: #117865; }
.tab.extra { background: #fff; color: #1c6b59; font-weight: 600; margin-right: 4px; }
.share-button { margin: 5px 0 0 auto; width: 105px; height: 30px; border-radius: 4px; background: #117865; color: #fff; display: flex; align-items: center; justify-content: center; gap: 8px; }
.share-button svg { stroke: #fff; stroke-width: 1.5; }
.groups { display: flex; height: 112px; padding-bottom: 1px; }
.group { border-right: 1px solid #d2d0ce; display: flex; flex-direction: column; justify-content: space-between; }
.group-name { font-size: 12px; line-height: 16px; text-align: center; }
.tools { display: grid; justify-content: center; align-items: start; }
.clip { width: 201px; }
.clip-tools { display: flex; }
.clip-tools .tool { width: 52px; margin-left: 9px; }
.clip-list { display: flex; flex-direction: column; gap: 8px; padding-top: 4px; margin-left: 3px; }
.clip-list button { display: flex; align-items: center; gap: 4px; height: 22px; white-space: nowrap; }
.data { width: 459px; }
.data .tools { grid-template-columns: 54px 66px 82px 48px 52px 68px 70px; }
.queries { width: 145px; }
.queries .tools { grid-template-columns: 72px 52px; }
.insert { width: 184px; }
.insert .tools { grid-template-columns: 52px 48px 64px; }
.calc { width: 143px; }
.calc .tools { grid-template-columns: 62px 60px; }
.sens { width: 91px; }
.publish { width: 74px; }
.copilot { width: 72px; }
.tool { display: flex; flex-direction: column; align-items: center; padding-top: 4px; white-space: nowrap; }
.tool-icon { width: 40px; height: 40px; margin-bottom: 5px; font-family: "Open Sans", sans-serif; }
.tool.off { color: #c8c6c4; }
.second { display: flex; align-items: center; gap: 2px; min-height: 20px; }
.caret { stroke: currentColor; stroke-width: 1.8; }
.collapse { margin-left: auto; padding: 97px 6px 0 0; align-self: flex-start; }
.collapse svg { stroke: #252423; stroke-width: 2; }

.body { flex: 1; display: flex; align-items: stretch; }
.rail { width: 50px; display: flex; flex-direction: column; font-family: "Open Sans", sans-serif; }
.rail button { height: 50px; display: flex; align-items: center; justify-content: center; border-left: 3px solid transparent; }
.rail .current { border-color: #117865; }
.work { flex: 1; min-width: 0; display: flex; flex-direction: column; border-left: 1px solid #d9d7d5; }
.upper { flex: 1; display: flex; }
.canvas { flex: 1; min-width: 0; background: linear-gradient(105deg, #4c4696 0%, #4c4696 22%, #9155c0 95%); }
.page { display: flex; align-items: flex-start; gap: 17px; padding: 22px 0 48px 16px; border-bottom: 1px dashed #55506f; }
.visual { background: rgba(255, 255, 255, .97); position: relative; }
.visual h2 { font: 15px/20px Roboto, sans-serif; padding-left: 5px; color: #252423; white-space: nowrap; }
.visual > svg { width: 100%; height: auto; }
.donut { flex: 528 1 0; min-width: 0; }
.selected { flex: 605 1 0; min-width: 0; }
.area { outline: 1px solid #c8c6c4; outline-offset: -1px; }
.blank { fill: #4590f7; }
.female { fill: #5fcbc8; }
.male { fill: #8250c4; }
.callout path { stroke: #a6a4a2; }
.callout text, .ticks text { font-size: 10px; fill: #605e5c; }
.legend-title { font-size: 12px; font-weight: 600; fill: #605e5c; }
.legend-text { font-size: 11px; fill: #605e5c; }
.grid path { stroke: #c4c2c0; stroke-dasharray: 1 4; }
.axis-title { font: 13px Roboto, sans-serif; fill: #252423; }
.handle { position: absolute; width: 11px; height: 11px; border: 0 solid #a19f9d; }
.tl { left: 0; top: 0; border-width: 4px 0 0 4px; }
.tr { right: 0; top: 0; border-width: 4px 4px 0 0; }
.bl { left: 0; bottom: 0; border-width: 0 0 4px 4px; }
.br { right: 0; bottom: 0; border-width: 0 4px 4px 0; }
.t, .b { left: 49%; width: 15px; height: 4px; background: #a19f9d; }
.t { top: 0; }
.b { bottom: 0; }
.l, .r { top: 49%; width: 4px; height: 15px; background: #a19f9d; }
.l { left: 0; }
.r { right: 0; }
.visual-actions { display: flex; justify-content: flex-end; gap: 4px; padding-top: 2px; }
.visual-actions button { width: 31px; height: 29px; background: #fcfbfe; display: grid; place-items: center; }
.visual-actions svg { stroke: #a077d0; stroke-width: 1.5; }

.pane-head { height: 50px; display: flex; align-items: center; }
.pane-head h3 { font-size: 18px; font-weight: 600; line-height: 24px; }
.pane-head button { margin-left: auto; }
.pane-head svg { stroke: currentColor; stroke-width: 1.5; }
.filters { width: 250px; background: #9256c0; color: #fff; border-left: 1px solid #c9b3de; }
.filters .pane-head { padding: 0 11px 0 14px; }
.filters h3 { font-size: 17px; margin-left: 9px; }
.filters .eye { margin-left: auto; }
.filters .pane-head button { margin-left: 20px; }
.filter-search { display: flex; align-items: center; gap: 17px; height: 38px; margin: 7px 15px 5px 10px; padding-left: 13px; border: 1px solid #bb98da; border-radius: 2px; font-size: 15px; }
.filter-search svg { stroke: #fff; stroke-width: 1.5; }
.filter-search input { flex: 1; }
.filter-search input::placeholder { color: #fff; opacity: 1; }
.filter-section { padding: 0 9px 33px 10px; }
.filter-search + .filter-section { border-top: 1px solid #c9b3de; padding-top: 21px; }
.section-head { display: flex; justify-content: space-between; margin-bottom: 11px; padding-right: 5px; }
.filter-card { height: 57px; border: 1px solid #cdb4e2; border-radius: 2px; padding: 4px 10px; display: flex; flex-direction: column; line-height: 23px; margin-bottom: 8px; }
.filter-card.drop { align-items: center; justify-content: center; margin: 0; }

.pages { height: 44px; display: flex; align-items: flex-start; }
.layout { width: 30px; height: 38px; margin-left: 13px; display: flex; justify-content: center; align-items: center; }
.layout + .layout { margin-left: 25px; }
.layout svg { stroke: #484644; stroke-width: 1.6; }
.desktop { border-bottom: 3px solid #117865; }
.step { height: 42px; margin-left: 19px; }
.step + .step { margin-left: 22px; }
.step svg { fill: #bab8b6; }
.page-tab { margin-left: 9px; width: 93px; height: 44px; background: #fff; border-left: 1px solid #a19f9d; border-bottom: 5px solid #117865; padding-top: 5px; font-weight: 500; }
.add-page { width: 50px; height: 44px; background: #117865; display: grid; place-items: center; }
.add-page svg { stroke: #fff; stroke-width: 4; }

.viz { width: 228px; border-left: 1px solid #e1dfdd; border-right: 1px solid #d9d7d5; display: flex; flex-direction: column; }
.viz .pane-head { padding: 0 9px 0 11px; }
.build { line-height: 16px; padding-left: 11px; }
.modes { display: flex; justify-content: space-between; padding: 6px 10px 6px 11px; }
.mode { width: 40px; height: 40px; display: grid; place-items: center; border-radius: 2px; }
.mode.on { background: #d2d0ce; }
.divider { height: 10px; padding-left: 21px; background: linear-gradient(#8a8886, #8a8886) 0 100% / 100% 1px no-repeat; }
.divider svg { stroke: #8a8886; background: #f3f2f1; }
.gallery { display: grid; grid-template-columns: repeat(6, 35px); grid-auto-rows: 35px; padding: 8px 0 0 8px; font-family: "Open Sans", sans-serif; }
.gallery button { display: grid; place-items: center; margin: 2px; border: 1px solid transparent; }
.gallery .picked { border-color: #252423; background: #fff; }
.more-visuals { align-self: flex-start; padding-left: 16px; height: 40px; padding-bottom: 20px; }
.wells { border-top: 1px solid #d9d7d5; padding: 11px 9px 11px 6px; position: relative; }
.wells h4 { padding-left: 10px; margin-bottom: 6px; }
.well { height: 34px; border: 1px dashed #bdbbb9; background: #fff; margin-bottom: 14px; padding: 6px 13px; border-radius: 2px; }
.well.filled { height: 44px; padding: 4px 3px; }
.well.cut { height: 1px; border-width: 1px 0 0; margin: 0; padding: 0; }
.pill { height: 28px; background: #edebe9; border: 1px solid #bdbbb9; border-radius: 2px; display: flex; align-items: center; gap: 8px; padding: 0 4px 0 5px; }
.pill span { flex: 1; }
.pill svg { stroke: #323130; stroke-width: 1.3; }
.scrollbar { position: absolute; top: 2px; right: 0; width: 7px; height: 207px; border-radius: 4px; background: #d0cecc; }

.data-pane { width: 225px; }
.data-pane .pane-head { padding: 0 9px 0 11px; }
.data-search { height: 31px; margin: 7px 5px 11px; display: flex; align-items: center; gap: 9px; padding-left: 15px; background: #fff; border: 1px solid #d2d0ce; border-bottom-color: #605e5c; border-radius: 4px; font-size: 16px; }
.data-search svg { stroke: #484644; stroke-width: 1.4; }
.data-search input { flex: 1; }
.data-search input::placeholder { color: #605e5c; opacity: 1; }
.data-pane ul { list-style: none; }
.data-pane li { height: 30px; display: flex; align-items: center; white-space: nowrap; }
.data-pane li label { display: flex; align-items: center; }
.level0 { padding-left: 17px; }
.level1 { padding-left: 36px; }
.level2 { padding-left: 55px; }
.level3 { padding-left: 74px; }
.twist { width: 19px; flex: none; display: flex; }
.twist svg { stroke: #484644; stroke-width: 1.3; }
.kind { margin-right: 7px; }
label .kind { margin: 0 6px 0 10px; }
.badge-host { position: relative; width: 16px; }
.badge { position: absolute; left: 8px; top: 7px; }
input[type="checkbox"] { appearance: none; width: 15px; height: 15px; margin: 0; border: 1px solid #797775; border-radius: 2px; background: #fcfcfc; position: relative; flex: none; }
input[type="checkbox"]:checked { background: #117865; border-color: #117865; }
input[type="checkbox"]:checked::after { content: ""; position: absolute; left: 3px; top: 2px; width: 8px; height: 4px; border: solid #fff; border-width: 0 0 2px 2px; transform: rotate(-45deg); }

.status { height: 30px; border-top: 1px solid #d9d7d5; border-bottom: 1px solid #000; display: flex; justify-content: space-between; align-items: center; padding: 1px 23px 0 5px; color: #3b3a39; }
.zoom { display: flex; align-items: center; }
.zoom svg { stroke: #3b3a39; }
.zoom input { appearance: none; width: 122px; height: 14px; margin: 0 7px 0 8px; background: linear-gradient(#605e5c, #605e5c) 50% 50% / 100% 1px no-repeat, linear-gradient(#605e5c, #605e5c) 50% 50% / 1px 7px no-repeat; }
.zoom input::-webkit-slider-thumb { appearance: none; width: 5px; height: 13px; background: #3b3a39; }
.percent { margin: 0 24px 0 16px; }
</style>
